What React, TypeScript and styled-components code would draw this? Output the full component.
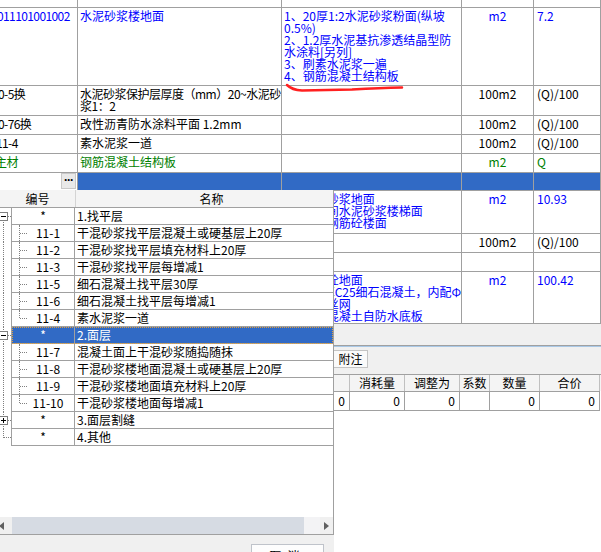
import React from "react";
import styled, { createGlobalStyle } from "styled-components";

const LINE = "#a0a0a0";
const BLUE = "#0000ff";
const GREEN = "#008000";
const HILITE = "#316ac5";
const PANEL = "#f0f0f0";

interface BillRow {
  height: number;
  code?: string;
  indent?: number;
  name?: string[];
  tightName?: boolean;
  desc?: string[];
  unit?: string;
  expr?: string;
  color?: string;
  selected?: boolean;
}

const BILL_ROWS: BillRow[] = [
  { height: 8 },
  {
    height: 78,
    code: "011101001002",
    indent: -3,
    name: ["水泥砂浆楼地面"],
    desc: [
      "1、20厚1:2水泥砂浆粉面(纵坡",
      "0.5%)",
      "2、1.2厚水泥基抗渗透结晶型防",
      "水涂料[另列]",
      "3、刷素水泥浆一遍",
      "4、钢筋混凝土结构板",
    ],
    unit: "m2",
    expr: "7.2",
    color: BLUE,
  },
  {
    height: 30,
    code: "10-5换",
    indent: -8,
    name: ["水泥砂浆保护层厚度（mm）20~水泥砂", "浆1：2"],
    tightName: true,
    unit: "100m2",
    expr: "(Q)/100",
  },
  {
    height: 19,
    code: "10-76换",
    indent: -8,
    name: ["改性沥青防水涂料平面 1.2mm"],
    unit: "100m2",
    expr: "(Q)/100",
  },
  { height: 19, code: "11-4", indent: -4, name: ["素水泥浆一道"], unit: "100m2", expr: "(Q)/100" },
  { height: 19, code: "主材", indent: -5, name: ["钢筋混凝土结构板"], unit: "m2", expr: "Q", color: GREEN },
  { height: 18, selected: true },
  {
    height: 43,
    code: "011106004001",
    indent: -3,
    name: ["水泥砂浆楼梯面层"],
    desc: ["1、水泥砂浆地面", "2、楼梯间水泥砂浆楼梯面", "3、楼面钢筋砼楼面"],
    unit: "m2",
    expr: "10.93",
    color: BLUE,
  },
  { height: 19, code: "11-29", indent: -4, name: ["水泥砂浆楼梯面层"], unit: "100m2", expr: "(Q)/100" },
  { height: 19 },
  {
    height: 52,
    code: "011101003001",
    indent: -3,
    name: ["细石混凝土楼地面"],
    desc: ["1、细石砼地面", "2、150厚C25细石混凝土，内配Φ", "3、铺钢丝网", "4、钢筋混凝土自防水底板"],
    unit: "m2",
    expr: "100.42",
    color: BLUE,
  },
];

interface QuotaRow {
  code: string;
  name: string;
  group?: "open" | "closed" | "leaf";
  last?: boolean;
  selected?: boolean;
}

const QUOTA_ROWS: QuotaRow[] = [
  { code: "*", name: "1.找平层", group: "open" },
  { code: "11-1", name: "干混砂浆找平层混凝土或硬基层上20厚" },
  { code: "11-2", name: "干混砂浆找平层填充材料上20厚" },
  { code: "11-3", name: "干混砂浆找平层每增减1" },
  { code: "11-5", name: "细石混凝土找平层30厚" },
  { code: "11-6", name: "细石混凝土找平层每增减1" },
  { code: "11-4", name: "素水泥浆一道", last: true },
  { code: "*", name: "2.面层", group: "open", selected: true },
  { code: "11-7", name: "混凝土面上干混砂浆随捣随抹" },
  { code: "11-8", name: "干混砂浆楼地面混凝土或硬基层上20厚" },
  { code: "11-9", name: "干混砂浆楼地面填充材料上20厚" },
  { code: "11-10", name: "干混砂浆楼地面每增减1", last: true },
  { code: "*", name: "3.面层割缝", group: "closed" },
  { code: "*", name: "4.其他", group: "leaf" },
];

const TABS = [
  { label: "工料机显示", width: 70 },
  { label: "单价构成", width: 62 },
  { label: "标准换算", width: 62 },
  { label: "换算信息", width: 62 },
  { label: "特征及内容", width: 77 },
  { label: "附注", width: 35 },
];

const DETAIL_COLS = [
  { label: "编码", width: 70, value: "", align: "left" },
  { label: "名称", width: 100, value: "", align: "left" },
  { label: "规格及型号", width: 60, value: "", align: "left" },
  { label: "单位", width: 35, value: "", align: "center" },
  { label: "含量", width: 30, value: "", align: "right" },
  { label: "单价", width: 55, value: "0", align: "right" },
  { label: "消耗量", width: 55, value: "0", align: "right" },
  { label: "调整为", width: 55, value: "0", align: "right" },
  { label: "系数", width: 30, value: "", align: "right" },
  { label: "数量", width: 50, value: "0", align: "right" },
  { label: "合价", width: 60, value: "0", align: "right" },
];

const GlobalStyle = createGlobalStyle`
  html, body {
    margin: 0;
    padding: 0;
    background: #fff;
  }
  body {
    font-family: "Noto Sans CJK SC", sans-serif;
    font-size: 12px;
    color: #000;
  }
  * {
    box-sizing: border-box;
  }
`;

const Screen = styled.div`
  position: relative;
  width: 601px;
  height: 552px;
  overflow: hidden;
  background: #fff;
  display: flex;
  flex-direction: column;
`;

const BillRowBox = styled.div<{ $h: number }>`
  flex: none;
  display: grid;
  grid-template-columns: 78px 204px 180px 72px 1fr;
  height: ${({ $h }) => $h}px;
`;

const Cell = styled.div<{
  $color?: string;
  $align?: string;
  $sel?: boolean;
  $pad?: number;
  $tight?: boolean;
}>`
  border-right: 1px solid ${LINE};
  border-bottom: 1px solid ${LINE};
  overflow: hidden;
  white-space: nowrap;
  padding: 2px ${({ $pad }) => $pad ?? 2}px 0;
  line-height: 12px;
  text-align: ${({ $align }) => $align ?? "left"};
  color: ${({ $color }) => $color ?? "#000"};
  background: ${({ $sel }) => ($sel ? HILITE : "#fff")};
  letter-spacing: ${({ $tight }) => ($tight ? "-0.5px" : "0")};
`;

const CodeCell = styled(Cell)<{ $indent: number }>`
  padding-left: 0;
  text-indent: ${({ $indent }) => $indent}px;
  letter-spacing: -0.6px;
`;

const PickerCell = styled(Cell)`
  display: flex;
  justify-content: flex-end;
  padding: 0 1px 0 0;
`;

const DotButton = styled.div`
  width: 15px;
  height: 16px;
  border: 1px solid #c8c8c8;
  background: #e9e9e9;
  font-family: "Liberation Sans", sans-serif;
  font-weight: bold;
  font-size: 12px;
  line-height: 12px;
  text-align: center;
  letter-spacing: -1px;
`;

const GrayGap = styled.div`
  flex: none;
  height: 21px;
  background: ${PANEL};
`;

const Splitter = styled.div`
  flex: none;
  height: 2px;
  border-top: 1px solid ${LINE};
  background: #a9c8e6;
`;

const TabBar = styled.div`
  flex: none;
  height: 27px;
  background: ${PANEL};
  display: flex;
  align-items: flex-start;
  padding-top: 3px;
`;

const Tab = styled.div<{ $w: number }>`
  width: ${({ $w }) => $w}px;
  height: 18px;
  border: 1px solid #c4c4c4;
  background: #fafafa;
  line-height: 15px;
  text-align: center;
`;

const DetailHead = styled.div`
  flex: none;
  display: flex;
  height: 17px;
  border-top: 1px solid ${LINE};
  background: #f4f4f4;
`;

const DetailHeadCell = styled.div<{ $w: number }>`
  width: ${({ $w }) => $w}px;
  border-right: 1px solid #c0c0c0;
  text-align: center;
  line-height: 16px;
  overflow: hidden;
  white-space: nowrap;
`;

const DetailRow = styled.div`
  flex: none;
  display: flex;
  height: 20px;
  border-top: 1px solid ${LINE};
  border-bottom: 1px solid ${LINE};
  background: #fff;
  width: 600px;
`;

const DetailCell = styled.div<{ $w: number; $align: string }>`
  width: ${({ $w }) => $w}px;
  border-right: 1px solid ${LINE};
  text-align: ${({ $align }) => $align};
  padding: 0 4px;
  line-height: 17px;
`;

/* ---------- popup picker ---------- */

const Popup = styled.div`
  position: absolute;
  left: 0;
  top: 190px;
  width: 334px;
  height: 362px;
  display: flex;
  flex-direction: column;
  background: ${PANEL};
`;

const PopGrid = styled.div`
  flex: none;
  height: 345px;
  display: flex;
  flex-direction: column;
  background: #fff;
  border-right: 1px solid ${LINE};
  border-bottom: 1px solid ${LINE};
`;

const PopHeader = styled.div`
  flex: none;
  height: 18px;
  display: grid;
  grid-template-columns: 75px 1fr;
  background: #f4f4f4;
  border-bottom: 1px solid ${LINE};
  line-height: 17px;
`;

const HeadLabel = styled.div<{ $shift?: number }>`
  text-align: center;
  padding-left: ${({ $shift }) => $shift ?? 0}px;
  & + & {
    border-left: 1px solid #d4d4d4;
  }
`;

const PopRow = styled.div`
  flex: none;
  height: 17px;
  display: flex;
`;

const TreeCell = styled.div<{ $up: boolean; $down: boolean; $branch: boolean }>`
  position: relative;
  flex: none;
  width: 12px;
  border-right: 1px solid ${LINE};
  &::before {
    content: "";
    position: absolute;
    left: 3px;
    top: ${({ $up }) => ($up ? "0" : "8px")};
    bottom: ${({ $down }) => ($down ? "0" : "8px")};
    border-left: 1px dotted #808080;
  }
  &::after {
    content: "";
    display: ${({ $branch }) => ($branch ? "block" : "none")};
    position: absolute;
    left: 4px;
    right: 0;
    top: 8px;
    border-top: 1px dotted #808080;
  }
`;

const ExpandBox = styled.div<{ $open: boolean }>`
  position: absolute;
  z-index: 1;
  left: -1px;
  top: 4px;
  width: 9px;
  height: 9px;
  border: 1px solid #808080;
  background: #fff;
  &::before {
    content: "";
    position: absolute;
    left: 1px;
    right: 1px;
    top: 3px;
    height: 1px;
    background: #000;
  }
  &::after {
    content: "";
    display: ${({ $open }) => ($open ? "none" : "block")};
    position: absolute;
    top: 1px;
    bottom: 1px;
    left: 3px;
    width: 1px;
    background: #000;
  }
`;

const RowBody = styled.div<{ $sel?: boolean }>`
  flex: 1;
  display: grid;
  grid-template-columns: 63px 1fr;
  border-bottom: 1px solid ${LINE};
  background: ${({ $sel }) => ($sel ? HILITE : "#fff")};
  color: ${({ $sel }) => ($sel ? "#fff" : "#000")};
  outline: ${({ $sel }) => ($sel ? "1px dotted #e0a040" : "none")};
  outline-offset: -1px;
  line-height: 16px;
  white-space: nowrap;
`;

const QuotaCode = styled.div<{ $branch?: "mid" | "last" }>`
  position: relative;
  border-right: 1px solid ${LINE};
  text-align: center;
  padding-left: ${({ $branch }) => ($branch ? 10 : 0)}px;
  &::before {
    content: "";
    display: ${({ $branch }) => ($branch ? "block" : "none")};
    position: absolute;
    left: 7px;
    top: 0;
    bottom: ${({ $branch }) => ($branch === "last" ? "8px" : "0")};
    border-left: 1px dotted #808080;
  }
  &::after {
    content: "";
    display: ${({ $branch }) => ($branch ? "block" : "none")};
    position: absolute;
    left: 8px;
    width: 7px;
    top: 8px;
    border-top: 1px dotted #808080;
  }
`;

const QuotaName = styled.div`
  padding-left: 2px;
  overflow: hidden;
`;

const PopFill = styled.div`
  flex: 1;
`;

const HScroll = styled.div`
  flex: none;
  height: 17px;
  display: flex;
  background: ${PANEL};
`;

const ScrollBtn = styled.div<{ $w: number; $dir: "left" | "right" }>`
  flex: none;
  width: ${({ $w }) => $w}px;
  display: flex;
  align-items: center;
  justify-content: ${({ $dir }) => ($dir === "left" ? "flex-start" : "flex-end")};
  padding-right: ${({ $dir }) => ($dir === "right" ? 4 : 0)}px;
  &::before {
    content: "";
    margin-left: ${({ $dir }) => ($dir === "left" ? -1 : 0)}px;
    border-top: 4px solid transparent;
    border-bottom: 4px solid transparent;
    ${({ $dir }) =>
      $dir === "left" ? "border-right: 5px solid #606060;" : "border-left: 5px solid #606060;"}
  }
`;

const ScrollThumb = styled.div`
  flex: none;
  width: 292px;
  background: #d6dbe3;
`;

const ScrollTrack = styled.div`
  flex: 1;
  background: #f3f3f5;
`;

const PopFooter = styled.div`
  flex: 1;
  display: flex;
  justify-content: flex-end;
  align-items: flex-start;
  padding: 9px 10px 0 0;
`;

const FooterButton = styled.div`
  flex: none;
  width: 73px;
  height: 24px;
  border: 1px solid #bfc3ca;
  background: #fdfdfd;
  text-align: center;
  line-height: 22px;
  letter-spacing: 6px;
`;

const Annotation = styled.svg`
  position: absolute;
  left: 284px;
  top: 80px;
  pointer-events: none;
`;

const lines = (items?: string[]) => items?.map((l, i) => <div key={i}>{l}</div>);

const App: React.FC = () => {
  return (
    <Screen>
      <GlobalStyle />
      {BILL_ROWS.map((row, idx) => (
        <BillRowBox key={`bill-${idx}`} $h={row.height}>
          {row.selected ? (
            <PickerCell>
              <DotButton>···</DotButton>
            </PickerCell>
          ) : (
            <CodeCell $indent={row.indent ?? 0} $color={row.color}>
              {row.code}
            </CodeCell>
          )}
          <Cell $color={row.color} $sel={row.selected} $tight={row.tightName}>
            {lines(row.name)}
          </Cell>
          <Cell $color={row.color} $sel={row.selected}>
            {lines(row.desc)}
          </Cell>
          <Cell $color={row.color} $sel={row.selected} $align="center">
            {row.unit}
          </Cell>
          <Cell $color={row.color} $sel={row.selected} $pad={3}>
            {row.expr}
          </Cell>
        </BillRowBox>
      ))}
      <GrayGap />
      <Splitter />
      <TabBar>
        {TABS.map((tab) => (
          <Tab key={tab.label} $w={tab.width}>
            {tab.label}
          </Tab>
        ))}
      </TabBar>
      <DetailHead>
        {DETAIL_COLS.map((col) => (
          <DetailHeadCell key={col.label} $w={col.width}>
            {col.label}
          </DetailHeadCell>
        ))}
      </DetailHead>
      <DetailRow>
        {DETAIL_COLS.map((col) => (
          <DetailCell key={col.label} $w={col.width} $align={col.align}>
            {col.value}
          </DetailCell>
        ))}
      </DetailRow>

      <Annotation width="124" height="14" viewBox="284 80 124 14">
        <path
          d="M287 85 Q292 90 302 90.5 L352 89.5 Q380 88 402 87.5"
          stroke="#ff2020"
          strokeWidth="2.5"
          fill="none"
          strokeLinecap="round"
        />
      </Annotation>

      <Popup>
        <PopGrid>
          <PopHeader>
            <HeadLabel>编号</HeadLabel>
            <HeadLabel $shift={14}>名称</HeadLabel>
          </PopHeader>
          {QUOTA_ROWS.map((row, idx) => {
            const isFirst = idx === 0;
            const isLastGroup = row.group === "leaf";
            const branch = row.group ? undefined : row.last ? "last" : "mid";
            return (
              <PopRow key={`quota-${idx}`}>
                <TreeCell $up={!isFirst} $down={!isLastGroup} $branch={!!row.group}>
                  {(row.group === "open" || row.group === "closed") && (
                    <ExpandBox $open={row.group === "open"} />
                  )}
                </TreeCell>
                <RowBody $sel={row.selected}>
                  <QuotaCode $branch={branch}>{row.code}</QuotaCode>
                  <QuotaName>{row.name}</QuotaName>
                </RowBody>
              </PopRow>
            );
          })}
          <PopFill />
          <HScroll>
            <ScrollBtn $w={12} $dir="left" />
            <ScrollThumb />
            <ScrollTrack />
            <ScrollBtn $w={13} $dir="right" />
          </HScroll>
        </PopGrid>
        <PopFooter>
          <FooterButton>取消</FooterButton>
        </PopFooter>
      </Popup>
    </Screen>
  );
};

export default App;
